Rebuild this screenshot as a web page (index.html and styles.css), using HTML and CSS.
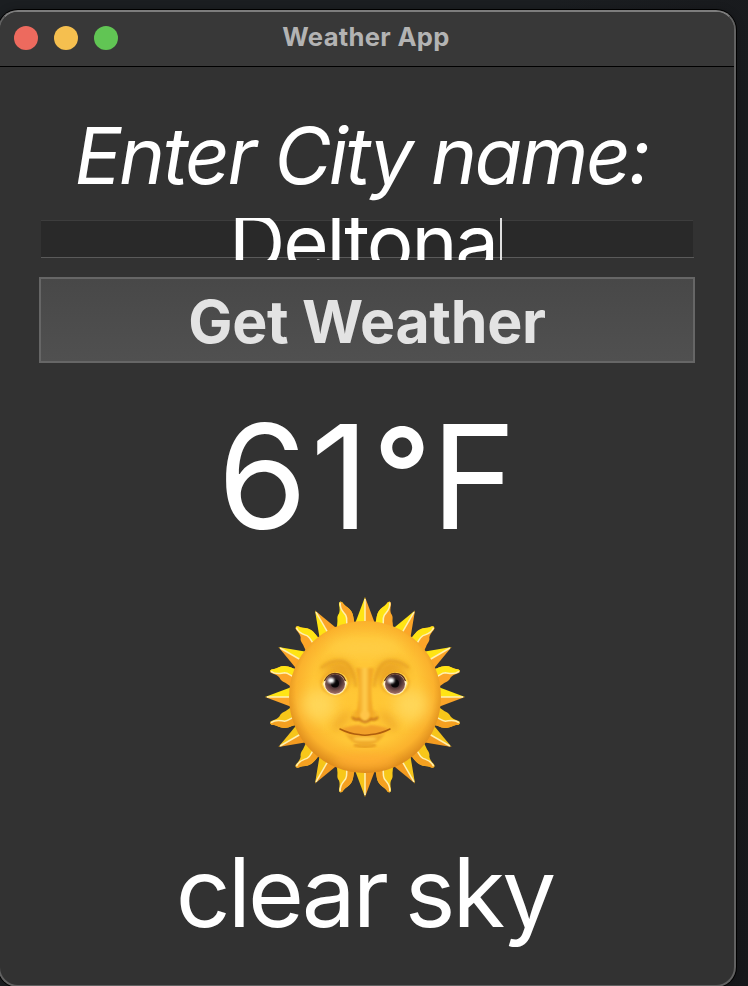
FILE: index.html
```html
<!DOCTYPE html>
<html lang="en">
<head>
<meta charset="utf-8">
<title>Weather App</title>
<link rel="stylesheet" href="styles.css">
</head>
<body>
<main class="window">
  <header class="titlebar">
    <div class="lights"><i class="light close"></i><i class="light minimize"></i><i class="light expand"></i></div>
    <h1 class="title">Weather App</h1>
  </header>
  <section class="content">
    <label class="prompt"><span>Enter City name:</span></label>
    <div class="field"><span class="field-text">Deltona</span><i class="caret"></i></div>
    <button class="submit"><span>Get Weather</span></button>
    <div class="temperature"><span class="digits">61</span><span class="degree">°</span><span>F</span></div>
    <svg class="sun" viewBox="0 0 220 215" width="220" height="215" aria-hidden="true">
      <defs>
        <g id="spike">
          <path class="side-a" d="M0-100L-10.500-72H0Z"/>
          <path class="side-b" d="M0-100L10.500-72H0Z"/>
          <path class="ridge" d="M0-98V-74"/>
        </g>
        <g id="flame">
          <path class="side-b" d="M-9.500-72C-8-76-10.500-81-9-86C-8-90-5-92-3.500-95Q-3-98-1-98.500Q1-98.500 1.200-96Q1.500-90 3.500-87.500C7-85 6-82 7.500-79L10-72Z"/>
          <path class="side-a" d="M-9.500-72C-8-76-10.500-81-9-86C-8-90-5-92-3.500-95Q-3-98-.5-98.500C2-91-1-88-2.500-84C-3.500-80-1-77-1-72Z"/>
          <path class="ridge" d="M-.5-97.500C2-91-1-88-2.500-84C-3.500-80-1-77-1-73"/>
        </g>
        <radialGradient id="skin" cx=".5" cy=".46" r=".54">
          <stop offset="0" stop-color="#ffc735"/><stop offset=".65" stop-color="#ffc637"/>
          <stop offset=".84" stop-color="#fbb22d"/><stop offset="1" stop-color="#db881a"/>
        </radialGradient>
        <linearGradient id="nose" x1="0" x2="1">
          <stop offset="0" stop-color="#e7981d" stop-opacity="0"/><stop offset=".28" stop-color="#f3a825"/>
          <stop offset=".5" stop-color="#ffcf50"/><stop offset=".68" stop-color="#f2a624"/>
          <stop offset="1" stop-color="#e7981d" stop-opacity="0"/>
        </linearGradient>
        <radialGradient id="iris" cx=".5" cy=".35" r=".65">
          <stop offset="0" stop-color="#160c0e"/><stop offset=".4" stop-color="#39252a"/><stop offset="1" stop-color="#a77368"/>
        </radialGradient>
        <filter id="soft" x="-60%" y="-60%" width="220%" height="220%"><feGaussianBlur stdDeviation="4"/></filter>
        <filter id="wide" x="-80%" y="-80%" width="260%" height="260%"><feGaussianBlur stdDeviation="7"/></filter>
        <filter id="fine" x="-50%" y="-50%" width="200%" height="200%"><feGaussianBlur stdDeviation=".8"/></filter>
        <clipPath id="disc"><circle r="76"/></clipPath>
        <g id="eye">
          <ellipse cy="-1" rx="15" ry="12.500" fill="#e99b20" opacity=".5" filter="url(#fine)"/>
          <path d="M-13.500 0Q-10-11.500 1-12Q11-11.500 13.500-1Q10 11 0 12Q-10 10-13.500 0Z" fill="#ffd344"/>
          <path d="M-12 0Q-9-10 0-10.500Q9-10 12-1Q9 11 0 11Q-9 10-12 0Z" fill="#fff0c8"/>
          <circle r="10" fill="url(#iris)"/>
          <path d="M-10.500-3Q-7-10.500 0-10.500Q8-10.500 10.500-3" fill="none" stroke="#60321c" stroke-width="1.300"/>
          <circle cy="-.5" r="4" fill="#080507"/>
          <ellipse cx="-4" cy="-3.500" rx="3.400" ry="2.800" fill="#fff" filter="url(#fine)"/>
        </g>
      </defs>
      <g transform="translate(110 107)">
        <g class="rays-top">
          <use href="#spike"/><use href="#spike" transform="rotate(30)"/><use href="#spike" transform="rotate(60)"/>
          <use href="#spike" transform="rotate(90)"/><use href="#spike" transform="rotate(-30)"/>
          <use href="#spike" transform="scale(-1 1) rotate(60)"/><use href="#spike" transform="scale(-1 1) rotate(90)"/>
          <use href="#flame" transform="rotate(15)"/><use href="#flame" transform="rotate(45)"/><use href="#flame" transform="rotate(75)"/>
          <use href="#flame" transform="scale(-1 1) rotate(45)"/><use href="#flame" transform="scale(-1 1) rotate(75)"/>
        </g>
        <g class="rays-top-flipped"><use href="#flame" transform="scale(-1 1) rotate(15)"/></g>
        <g class="rays-low">
          <use href="#spike" transform="rotate(120)"/><use href="#spike" transform="rotate(150)"/>
          <use href="#spike" transform="scale(1 -1)"/><use href="#spike" transform="scale(1 -1) rotate(-30)"/>
          <use href="#spike" transform="scale(-1 1) rotate(120)"/>
        </g>
        <g class="rays-low-flipped">
          <use href="#flame" transform="scale(1 -1) rotate(15)"/><use href="#flame" transform="scale(1 -1) rotate(45)"/><use href="#flame" transform="scale(1 -1) rotate(75)"/>
          <use href="#flame" transform="scale(-1 -1) rotate(15)"/><use href="#flame" transform="scale(-1 -1) rotate(45)"/><use href="#flame" transform="scale(-1 -1) rotate(75)"/>
        </g>
        <circle r="76" fill="url(#skin)"/>
        <g clip-path="url(#disc)">
          <ellipse cy="-49" rx="38" ry="8" fill="#ffd04c" opacity=".8" filter="url(#wide)"/>
          <ellipse cx="-46" cy="8" rx="17" ry="16" fill="#ffda62" opacity=".8" filter="url(#wide)"/>
          <ellipse cx="46" cy="8" rx="17" ry="16" fill="#ffda62" opacity=".8" filter="url(#wide)"/>
          <ellipse cy="64" rx="31" ry="7" fill="#ffab30" opacity=".7" filter="url(#soft)"/>
          <path d="M-46-25Q-36-38-22-36Q-9-32-10-10Q-23-28-46-25ZM46-25Q36-38 22-36Q9-32 10-10Q23-28 46-25Z" fill="#dc8c17" opacity=".6" filter="url(#soft)"/>
          <path d="M-44-29Q-32-39-20-35Q-11-29-9-10M44-29Q32-39 20-35Q11-29 9-10" fill="none" stroke="#d98c1a" stroke-width="3" opacity=".35" filter="url(#fine)"/>
          <path d="M-16 17Q-26 22-30 33M16 17Q26 22 30 33" fill="none" stroke="#dc861a" stroke-width="6" opacity=".5" filter="url(#soft)"/>
        </g>
        <path d="M-9-29Q-4-8-8 13Q-15 15-14 20Q-11 24-5 23Q0 27 5 23Q11 24 14 20Q15 15 8 13Q4-8 9-29Z" fill="url(#nose)" filter="url(#fine)"/>
        <path d="M-13 20Q-10 24-6 22Q0 28 6 22Q10 24 13 20" fill="none" stroke="#b95f11" stroke-width="2.200" opacity=".8" filter="url(#fine)"/>
        <ellipse cy="18" rx="4.500" ry="4" fill="#ffc548" filter="url(#fine)"/>
        <use href="#eye" x="-30" y="-13"/><use href="#eye" x="30" y="-13"/>
        <path d="M-25 32Q-13 28-5 28Q0 31 5 28Q13 28 25 32Q15 40 0 40Q-15 40-25 32Z" fill="#f2a12a" filter="url(#fine)"/>
        <path d="M-20 37Q0 42 20 37Q11 49 0 49Q-11 49-20 37Z" fill="#f0aa2c" filter="url(#fine)"/>
        <ellipse cy="42" rx="12" ry="2" fill="#ffcb48" filter="url(#fine)"/>
        <path d="M-25 32Q-15 37-6 37.500Q0 39 6 37.500Q15 37 25 32" fill="none" stroke="#ae5e0d" stroke-width="1.500" stroke-linecap="round"/>
        <path d="M-11 48Q0 52 11 48" fill="none" stroke="#d58117" stroke-width="2" opacity=".7" filter="url(#fine)"/>
      </g>
    </svg>
    <div class="description"><span>clear sky</span></div>
  </section>
</main>
</body>
</html>
```
FILE: styles.css
```css
* { box-sizing: border-box; }
html { background: #1a1c1f; }
body {
  margin: 0;
  height: 986px;
  padding-top: 10px;
  overflow: hidden;
  font-family: Inter, "Liberation Sans", sans-serif;
  color: #fff;
  background: linear-gradient(100deg, #1b1e21 60%, #16171a);
}
.window {
  width: 738px;
  height: 977px;
  margin-left: -2px;
  border: 2px solid #616161;
  border-top-color: #7d7d7d;
  border-radius: 20px;
  background: #323232;
  box-shadow: 0 0 0 1px #000, 0 0 8px #0004;
  overflow: hidden;
}
.titlebar {
  display: grid;
  grid-template-columns: 120px 1fr 120px;
  align-items: center;
  height: 55px;
  padding-bottom: 3px;
  background: #383838;
  border-bottom: 1px solid #000;
}
.lights { display: flex; gap: 16px; padding-left: 14px; }
.light { width: 24px; height: 24px; border-radius: 50%; }
.close { background: #ed6a5e; }
.minimize { background: #f5bf4f; }
.expand { background: #61c554; }
.title {
  margin: 0 2px 2px 0;
  text-align: center;
  font-size: 25.6px;
  line-height: 48px;
  font-weight: 700;
  letter-spacing: .3px;
  color: #b3b3b3;
  white-space: nowrap;
}
.content { display: flex; flex-direction: column; padding: 43px 39px 0; white-space: nowrap; text-align: center; }
.prompt { height: 92px; padding-right: 11px; line-height: 92px; font-size: 78px; font-style: italic; letter-spacing: -2.4px; }
.field {
  display: flex;
  justify-content: center;
  height: 42px;
  margin-top: 16px;
  overflow: hidden;
  background:
    linear-gradient(#3d3d3d, #3d3d3d) 2px 2px / 652px 1px no-repeat,
    linear-gradient(#5a5a5a, #5a5a5a) 2px 39px / 653px 1px no-repeat,
    linear-gradient(#292929, #292929) 2px 2px / 652px 37px no-repeat;
}
.field-text { font-size: 78px; line-height: 50px; letter-spacing: -2.2px; }
.caret { width: 2px; height: 42px; margin: 0 3px; background: #dedede; }
.submit {
  height: 86px;
  margin-top: 17px;
  padding: 3px 0 0;
  border: 2px solid #666;
  background: linear-gradient(#484848, #505050);
  color: #e3e3e3;
  font: 700 59px/79px Inter, "Liberation Sans", sans-serif;
  letter-spacing: -.3px;
}
.temperature { display: flex; justify-content: center; height: 227px; line-height: 227px; font-size: 145px; }
.digits { letter-spacing: 3px; }
.degree { margin: -4px 0 0 1px; font-size: 125px; font-weight: 600; }
.sun { align-self: center; margin-left: -4px; }
.description { height: 176px; padding-right: 5px; line-height: 175px; font-size: 96px; letter-spacing: -3px; word-spacing: -5px; }

.side-a { fill: var(--a); }
.side-b { fill: var(--b); }
.ridge { fill: none; stroke: #fff0b0; stroke-width: 1.5; }
.rays-top { --a: #ffe414; --b: #fca528; }
.rays-top-flipped { --a: #fca528; --b: #ffe414; }
.rays-low { --a: #f6c51a; --b: #f39b20; }
.rays-low-flipped { --a: #f4a020; --b: #f8c719; }
```
